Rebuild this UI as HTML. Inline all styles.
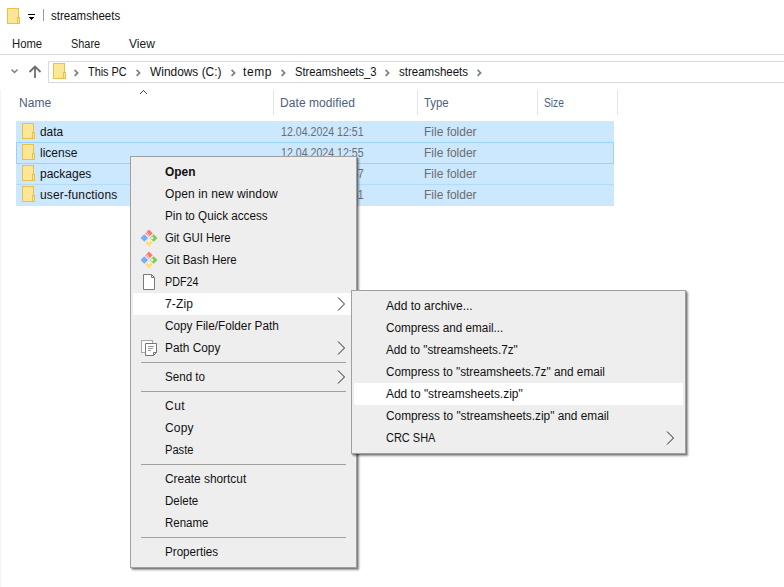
<!DOCTYPE html><html><head><meta charset="utf-8"><style>
html,body{margin:0;padding:0;background:#fff;width:784px;height:587px;overflow:hidden;position:relative}
.t{position:absolute;font-family:"Liberation Sans",sans-serif;font-size:12px;line-height:20px;white-space:pre}
.abs{position:absolute;display:block}
.line{position:absolute;background:#dadada}
</style></head><body>
<svg class="abs" style="left:7px;top:8px" width="14" height="17" viewBox="0 0 14 17"><rect x="0.5" y="0.5" width="11" height="15" fill="#fde696" stroke="#e9c04a"/><rect x="10.5" y="9.5" width="2" height="6" fill="#fde696" stroke="#e9c04a"/></svg>
<svg class="abs" style="left:27px;top:13px" width="10" height="9" viewBox="0 0 10 9" shape-rendering="crispEdges"><rect x="1" y="1" width="7" height="1" fill="#000"/><rect x="2" y="4" width="5" height="1" fill="#000"/><rect x="3" y="5" width="3" height="1" fill="#000"/><rect x="4" y="6" width="1" height="1" fill="#000"/></svg>
<div class="line" style="left:43px;top:9px;width:1px;height:12px;background:#9a9a9a"></div>
<div class="line" style="left:0;top:54px;width:784px;height:1px"></div>
<div class="abs" style="left:48px;top:61px;width:740px;height:20px;border:1px solid #d9d9d9;box-sizing:content-box"></div>
<svg class="abs" style="left:10px;top:67px" width="9" height="8" viewBox="0 0 9 8"><polyline points="1.5,2.5 4.5,5.5 7.5,2.5" fill="none" stroke="#7a7a7a" stroke-width="1.4"/></svg>
<svg class="abs" style="left:28px;top:64px" width="14" height="15" viewBox="0 0 14 15"><polyline points="1.5,8 7,2.5 12.5,8" fill="none" stroke="#6d6d6d" stroke-width="1.8"/><line x1="7" y1="2.5" x2="7" y2="14" stroke="#6d6d6d" stroke-width="1.8"/></svg>
<svg class="abs" style="left:53px;top:63px" width="14" height="17" viewBox="0 0 14 17"><rect x="0.5" y="0.5" width="11" height="15" fill="#fde696" stroke="#e9c04a"/><rect x="10.5" y="9.5" width="2" height="6" fill="#fde696" stroke="#e9c04a"/></svg>
<svg class="abs" style="left:73px;top:68px" width="7" height="9" viewBox="0 0 7 9"><polyline points="1.6,1.9 4.6,4.9 1.6,7.9" fill="none" stroke="#808080" stroke-width="1.7"/></svg>
<svg class="abs" style="left:135px;top:68px" width="7" height="9" viewBox="0 0 7 9"><polyline points="1.6,1.9 4.6,4.9 1.6,7.9" fill="none" stroke="#808080" stroke-width="1.7"/></svg>
<svg class="abs" style="left:230px;top:68px" width="7" height="9" viewBox="0 0 7 9"><polyline points="1.6,1.9 4.6,4.9 1.6,7.9" fill="none" stroke="#808080" stroke-width="1.7"/></svg>
<svg class="abs" style="left:280px;top:68px" width="7" height="9" viewBox="0 0 7 9"><polyline points="1.6,1.9 4.6,4.9 1.6,7.9" fill="none" stroke="#808080" stroke-width="1.7"/></svg>
<svg class="abs" style="left:384px;top:68px" width="7" height="9" viewBox="0 0 7 9"><polyline points="1.6,1.9 4.6,4.9 1.6,7.9" fill="none" stroke="#808080" stroke-width="1.7"/></svg>
<svg class="abs" style="left:476px;top:68px" width="7" height="9" viewBox="0 0 7 9"><polyline points="1.6,1.9 4.6,4.9 1.6,7.9" fill="none" stroke="#808080" stroke-width="1.7"/></svg>
<svg class="abs" style="left:140px;top:90px" width="7" height="4" viewBox="0 0 7 4" shape-rendering="crispEdges"><rect x="3" y="0" width="1" height="1" fill="#4a4a4a"/><rect x="2" y="1" width="1" height="1" fill="#4a4a4a"/><rect x="4" y="1" width="1" height="1" fill="#4a4a4a"/><rect x="1" y="2" width="1" height="1" fill="#4a4a4a"/><rect x="5" y="2" width="1" height="1" fill="#4a4a4a"/><rect x="0" y="3" width="1" height="1" fill="#4a4a4a"/><rect x="6" y="3" width="1" height="1" fill="#4a4a4a"/></svg>
<div class="line" style="left:273px;top:90px;width:1px;height:25px;background:#e5e5e5"></div>
<div class="line" style="left:417px;top:90px;width:1px;height:25px;background:#e5e5e5"></div>
<div class="line" style="left:537px;top:90px;width:1px;height:25px;background:#e5e5e5"></div>
<div class="line" style="left:617px;top:90px;width:1px;height:25px;background:#e5e5e5"></div>
<div class="line" style="left:0;top:90px;width:1px;height:497px;background:#f4f4f4"></div>
<div class="abs" style="left:16px;top:121px;width:598px;height:85px;background:#cce8ff"></div>
<div class="abs" style="left:16px;top:142px;width:596px;height:20px;border:1px solid #99d1ff"></div>
<div class="abs" style="left:16px;top:184px;width:598px;height:1px;background:#b0dcff"></div>
<svg class="abs" style="left:22px;top:123px" width="14" height="17" viewBox="0 0 14 17"><rect x="0.5" y="0.5" width="11" height="15" fill="#fde696" stroke="#e9c04a"/><rect x="10.5" y="9.5" width="2" height="6" fill="#fde696" stroke="#e9c04a"/></svg>
<svg class="abs" style="left:22px;top:144px" width="14" height="17" viewBox="0 0 14 17"><rect x="0.5" y="0.5" width="11" height="15" fill="#fde696" stroke="#e9c04a"/><rect x="10.5" y="9.5" width="2" height="6" fill="#fde696" stroke="#e9c04a"/></svg>
<svg class="abs" style="left:22px;top:165px" width="14" height="17" viewBox="0 0 14 17"><rect x="0.5" y="0.5" width="11" height="15" fill="#fde696" stroke="#e9c04a"/><rect x="10.5" y="9.5" width="2" height="6" fill="#fde696" stroke="#e9c04a"/></svg>
<svg class="abs" style="left:22px;top:186px" width="14" height="17" viewBox="0 0 14 17"><rect x="0.5" y="0.5" width="11" height="15" fill="#fde696" stroke="#e9c04a"/><rect x="10.5" y="9.5" width="2" height="6" fill="#fde696" stroke="#e9c04a"/></svg>
<div class="t" style="left:51px;top:6px;color:#111;transform:scaleX(0.9601);transform-origin:0 0;">streamsheets</div>
<div class="t" style="left:12px;top:34px;color:#1a1a1a;transform:scaleX(0.9415);transform-origin:0 0;">Home</div>
<div class="t" style="left:71px;top:34px;color:#1a1a1a;transform:scaleX(0.9088);transform-origin:0 0;">Share</div>
<div class="t" style="left:129px;top:34px;color:#1a1a1a;letter-spacing:0.068px;">View</div>
<div class="t" style="left:88px;top:62px;color:#111;transform:scaleX(0.9067);transform-origin:0 0;">This PC</div>
<div class="t" style="left:150px;top:62px;color:#111;transform:scaleX(0.9927);transform-origin:0 0;">Windows (C:)</div>
<div class="t" style="left:243px;top:62px;color:#111;letter-spacing:0.604px;">temp</div>
<div class="t" style="left:295px;top:62px;color:#111;transform:scaleX(0.9330);transform-origin:0 0;">Streamsheets_3</div>
<div class="t" style="left:399px;top:62px;color:#111;transform:scaleX(0.9587);transform-origin:0 0;">streamsheets</div>
<div class="t" style="left:19px;top:93px;color:#4c607a;letter-spacing:0.095px;">Name</div>
<div class="t" style="left:280px;top:93px;color:#4c607a;letter-spacing:0.071px;">Date modified</div>
<div class="t" style="left:424px;top:93px;color:#4c607a;transform:scaleX(0.9434);transform-origin:0 0;">Type</div>
<div class="t" style="left:544px;top:93px;color:#4c607a;transform:scaleX(0.8548);transform-origin:0 0;">Size</div>
<div class="t" style="left:40px;top:122px;color:#111;transform:scaleX(0.9839);transform-origin:0 0;">data</div>
<div class="t" style="left:281px;top:122px;color:#6d6d6d;transform:scaleX(0.8840);transform-origin:0 0;">12.04.2024 12:51</div>
<div class="t" style="left:424px;top:122px;color:#6d6d6d;transform:scaleX(0.9983);transform-origin:0 0;">File folder</div>
<div class="t" style="left:40px;top:143px;color:#111;">license</div>
<div class="t" style="left:281px;top:143px;color:#6d6d6d;transform:scaleX(0.8840);transform-origin:0 0;">12.04.2024 12:55</div>
<div class="t" style="left:424px;top:143px;color:#6d6d6d;transform:scaleX(0.9983);transform-origin:0 0;">File folder</div>
<div class="t" style="left:40px;top:164px;color:#111;">packages</div>
<div class="t" style="left:281px;top:164px;color:#6d6d6d;transform:scaleX(0.8840);transform-origin:0 0;">12.04.2024 12:57</div>
<div class="t" style="left:424px;top:164px;color:#6d6d6d;transform:scaleX(0.9983);transform-origin:0 0;">File folder</div>
<div class="t" style="left:40px;top:185px;color:#111;letter-spacing:0.140px;">user-functions</div>
<div class="t" style="left:281px;top:185px;color:#6d6d6d;transform:scaleX(0.8840);transform-origin:0 0;">12.04.2024 12:51</div>
<div class="t" style="left:424px;top:185px;color:#6d6d6d;transform:scaleX(0.9983);transform-origin:0 0;">File folder</div>
<div class="abs" style="left:130px;top:156px;width:225px;height:410px;border:1px solid #a0a0a0;background:#eeeeee;box-shadow:1px 1px 1px rgba(0,0,0,0.2),2px 2px 2px rgba(0,0,0,0.4)"></div>
<svg class="abs" style="left:140px;top:229px" width="18" height="18" viewBox="-9 -9 18 18"><g transform="rotate(45)"><rect x="-5.949999999999999" y="-5.949999999999999" width="5.3" height="5.3" fill="#ff7878"/><rect x="0.6499999999999999" y="-5.949999999999999" width="5.3" height="5.3" fill="#7ccc58"/><rect x="0.6499999999999999" y="0.6499999999999999" width="5.3" height="5.3" fill="#ffdf74"/><rect x="-5.949999999999999" y="0.6499999999999999" width="5.3" height="5.3" fill="#74acff"/></g><circle cx="3.2" cy="0" r="1.2" fill="#f4f0f8"/><circle cx="0" cy="3.2" r="1.1" fill="#f4f4f8"/><line x1="-2.6" y1="-5.8" x2="0.6" y2="-1.6" stroke="#f6f0f0" stroke-width="1.0"/></svg>
<svg class="abs" style="left:140px;top:251px" width="18" height="18" viewBox="-9 -9 18 18"><g transform="rotate(45)"><rect x="-5.949999999999999" y="-5.949999999999999" width="5.3" height="5.3" fill="#ff7878"/><rect x="0.6499999999999999" y="-5.949999999999999" width="5.3" height="5.3" fill="#7ccc58"/><rect x="0.6499999999999999" y="0.6499999999999999" width="5.3" height="5.3" fill="#ffdf74"/><rect x="-5.949999999999999" y="0.6499999999999999" width="5.3" height="5.3" fill="#74acff"/></g><circle cx="3.2" cy="0" r="1.2" fill="#f4f0f8"/><circle cx="0" cy="3.2" r="1.1" fill="#f4f4f8"/><line x1="-2.6" y1="-5.8" x2="0.6" y2="-1.6" stroke="#f6f0f0" stroke-width="1.0"/></svg>
<svg class="abs" style="left:143px;top:274px" width="12" height="16" viewBox="0 0 12 16"><path d="M0.5,0.5 H8.5 L11.5,3.5 V15.5 H0.5 Z" fill="#fff" stroke="#7a7a7a"/><path d="M8.5,0.5 V3.5 H11.5" fill="none" stroke="#7a7a7a"/></svg>
<div class="abs" style="left:133px;top:293px;width:221px;height:22px;background:#fff"></div>
<svg class="abs" style="left:337px;top:297px" width="9" height="14" viewBox="0 0 9 14"><polyline points="1,0.5 7.5,7 1,13.5" fill="none" stroke="#222" stroke-width="1"/></svg>
<svg class="abs" style="left:141px;top:340px" width="17" height="17" viewBox="0 0 17 17"><rect x="0.5" y="0.5" width="11" height="12" fill="#fbfbfb" stroke="#a8a8a8"/><path d="M4.5,3.5 H15.5 V12.5 L12.5,15.5 H4.5 Z" fill="#fff" stroke="#777"/><path d="M15.5,12.5 H12.5 V15.5" fill="none" stroke="#777"/><line x1="7" y1="6.5" x2="13" y2="6.5" stroke="#999"/><line x1="7" y1="8.5" x2="12" y2="8.5" stroke="#999"/><line x1="7" y1="10.5" x2="10" y2="10.5" stroke="#999"/></svg>
<svg class="abs" style="left:337px;top:341px" width="9" height="14" viewBox="0 0 9 14"><polyline points="1,0.5 7.5,7 1,13.5" fill="none" stroke="#222" stroke-width="1"/></svg>
<div class="abs" style="left:141px;top:362px;width:205px;height:1px;background:#a0a0a0"></div>
<svg class="abs" style="left:337px;top:370px" width="9" height="14" viewBox="0 0 9 14"><polyline points="1,0.5 7.5,7 1,13.5" fill="none" stroke="#222" stroke-width="1"/></svg>
<div class="abs" style="left:141px;top:391px;width:205px;height:1px;background:#a0a0a0"></div>
<div class="abs" style="left:141px;top:464px;width:205px;height:1px;background:#a0a0a0"></div>
<div class="abs" style="left:141px;top:537px;width:205px;height:1px;background:#a0a0a0"></div>
<div class="t" style="left:165px;top:162px;color:#111;font-weight:700;transform:scaleX(0.9942);transform-origin:0 0;">Open</div>
<div class="t" style="left:165px;top:184px;color:#111;letter-spacing:0.110px;">Open in new window</div>
<div class="t" style="left:165px;top:206px;color:#111;transform:scaleX(0.9734);transform-origin:0 0;">Pin to Quick access</div>
<div class="t" style="left:165px;top:228px;color:#111;transform:scaleX(0.9465);transform-origin:0 0;">Git GUI Here</div>
<div class="t" style="left:165px;top:250px;color:#111;transform:scaleX(0.9506);transform-origin:0 0;">Git Bash Here</div>
<div class="t" style="left:165px;top:272px;color:#111;transform:scaleX(0.8939);transform-origin:0 0;">PDF24</div>
<div class="t" style="left:165px;top:294px;color:#111;letter-spacing:0.164px;">7-Zip</div>
<div class="t" style="left:165px;top:316px;color:#111;transform:scaleX(0.9803);transform-origin:0 0;">Copy File/Folder Path</div>
<div class="t" style="left:165px;top:338px;color:#111;transform:scaleX(0.9882);transform-origin:0 0;">Path Copy</div>
<div class="t" style="left:165px;top:367px;color:#111;transform:scaleX(0.9684);transform-origin:0 0;">Send to</div>
<div class="t" style="left:165px;top:396px;color:#111;letter-spacing:0.506px;">Cut</div>
<div class="t" style="left:165px;top:418px;color:#111;letter-spacing:0.161px;">Copy</div>
<div class="t" style="left:165px;top:440px;color:#111;transform:scaleX(0.9263);transform-origin:0 0;">Paste</div>
<div class="t" style="left:165px;top:469px;color:#111;transform:scaleX(0.9896);transform-origin:0 0;">Create shortcut</div>
<div class="t" style="left:165px;top:491px;color:#111;transform:scaleX(0.9588);transform-origin:0 0;">Delete</div>
<div class="t" style="left:165px;top:513px;color:#111;transform:scaleX(0.9581);transform-origin:0 0;">Rename</div>
<div class="t" style="left:165px;top:542px;color:#111;transform:scaleX(0.9701);transform-origin:0 0;">Properties</div>
<div class="abs" style="left:351px;top:290px;width:333px;height:162px;border:1px solid #a0a0a0;background:#eeeeee;box-shadow:1px 1px 1px rgba(0,0,0,0.2),2px 2px 2px rgba(0,0,0,0.4)"></div>
<div class="abs" style="left:354px;top:383px;width:329px;height:22px;background:#fff"></div>
<svg class="abs" style="left:666px;top:431px" width="9" height="14" viewBox="0 0 9 14"><polyline points="1,0.5 7.5,7 1,13.5" fill="none" stroke="#222" stroke-width="1"/></svg>
<div class="t" style="left:386px;top:296px;color:#111;transform:scaleX(0.9998);transform-origin:0 0;">Add to archive...</div>
<div class="t" style="left:386px;top:318px;color:#111;transform:scaleX(0.9778);transform-origin:0 0;">Compress and email...</div>
<div class="t" style="left:386px;top:340px;color:#111;transform:scaleX(0.9791);transform-origin:0 0;">Add to &quot;streamsheets.7z&quot;</div>
<div class="t" style="left:386px;top:362px;color:#111;transform:scaleX(0.9807);transform-origin:0 0;">Compress to &quot;streamsheets.7z&quot; and email</div>
<div class="t" style="left:386px;top:384px;color:#111;transform:scaleX(0.9960);transform-origin:0 0;">Add to &quot;streamsheets.zip&quot;</div>
<div class="t" style="left:386px;top:406px;color:#111;transform:scaleX(0.9869);transform-origin:0 0;">Compress to &quot;streamsheets.zip&quot; and email</div>
<div class="t" style="left:386px;top:428px;color:#111;transform:scaleX(0.9148);transform-origin:0 0;">CRC SHA</div>
</body></html>
